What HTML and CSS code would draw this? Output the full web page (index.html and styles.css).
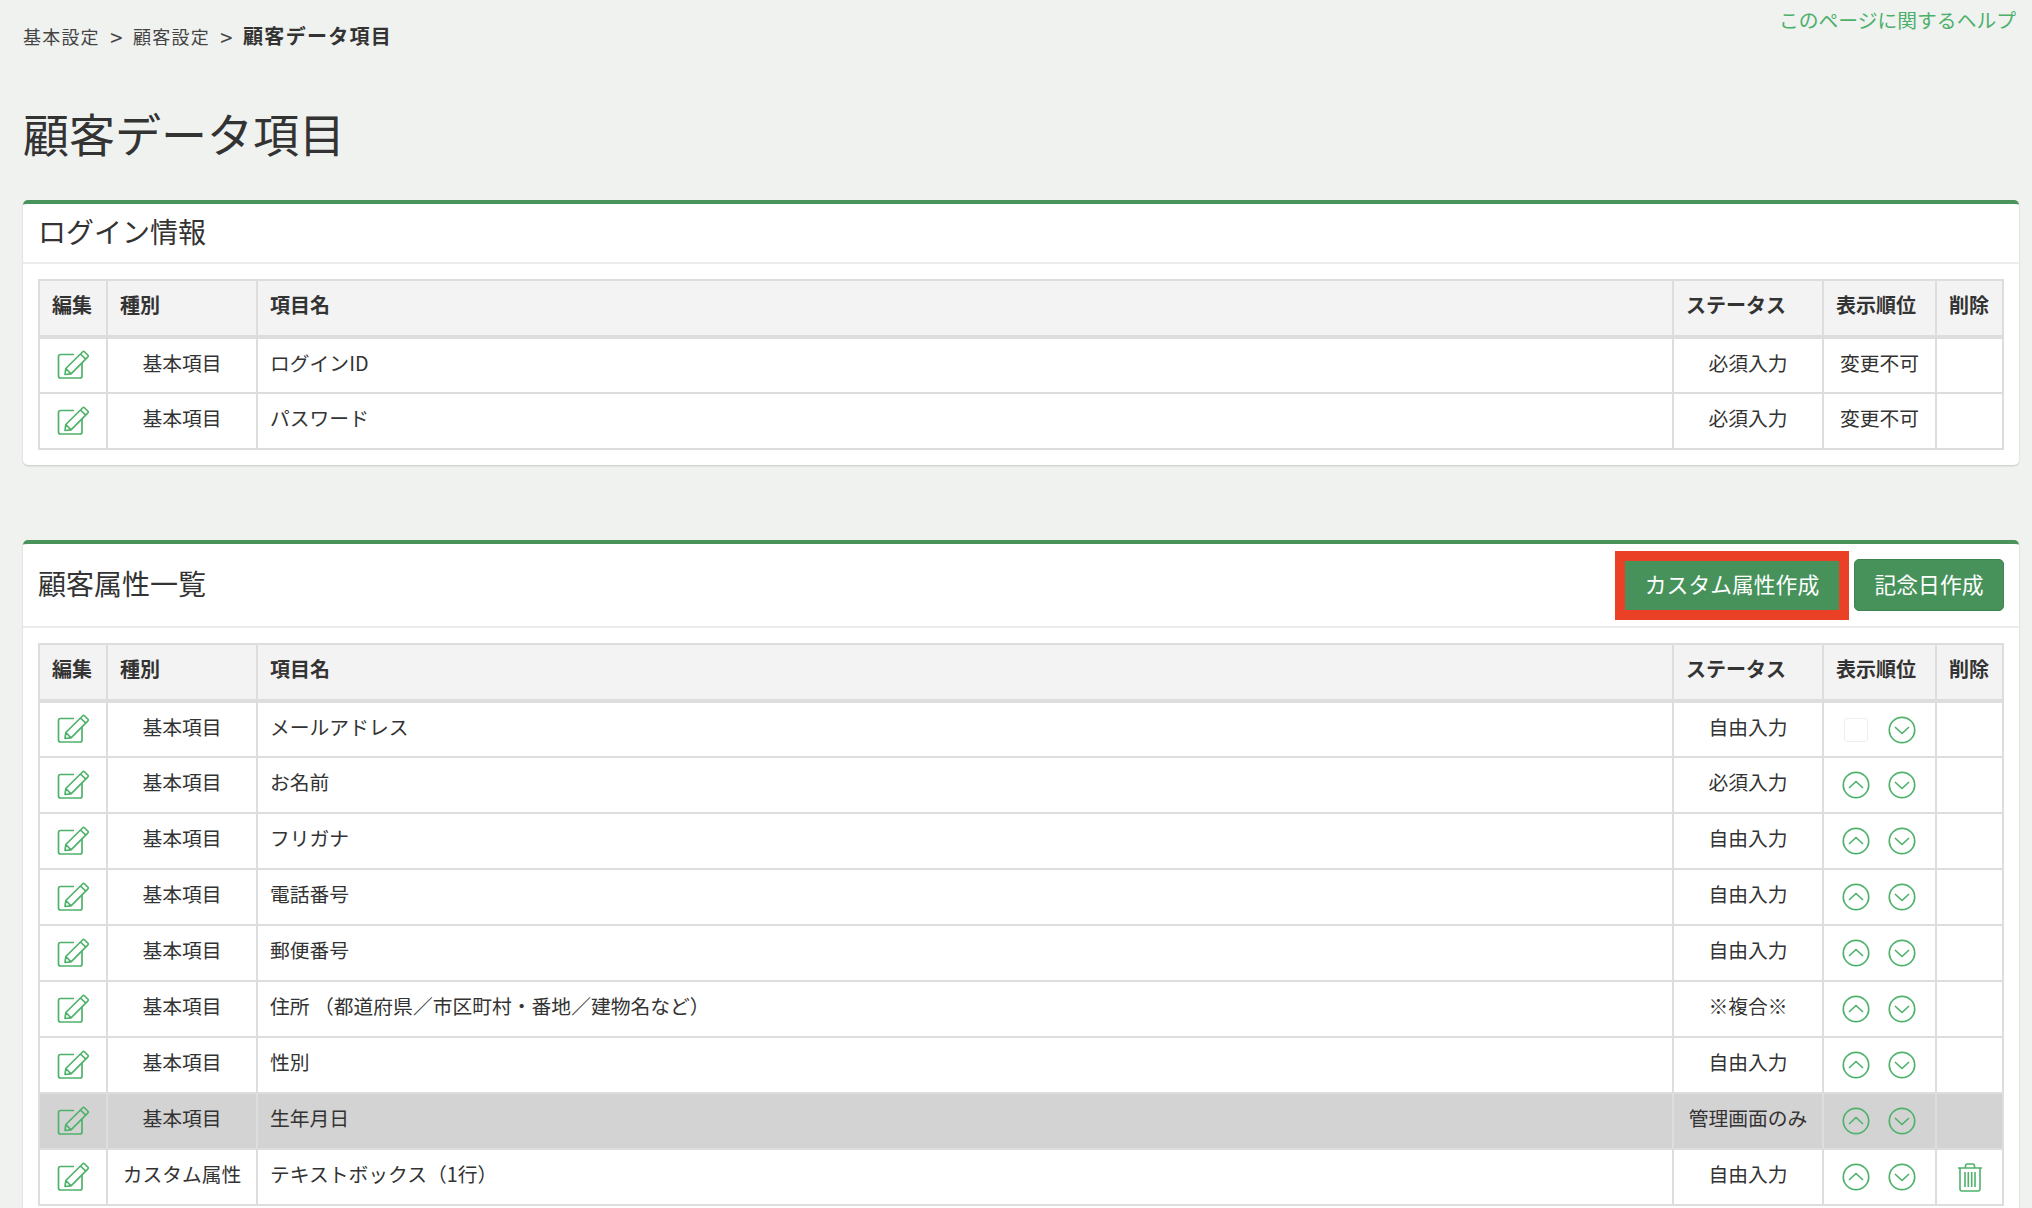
FILE: index.html
```html
<!DOCTYPE html>
<html lang="ja">
<head>
<meta charset="utf-8">
<title>顧客データ項目</title>
<link rel="stylesheet" href="styles.css">
</head>
<body>
<svg class="sprite" aria-hidden="true">
  <symbol id="i-edit" viewBox="0 0 33 29">
    <path d="M17 4.500H3.500a2 2 0 0 0-2 2V26a2 2 0 0 0 2 2H23a2 2 0 0 0 2-2V13" fill="none" stroke="currentColor" stroke-width="1.700"/>
    <path d="M8 24.500l.8-6L25.500 2a1.600 1.600 0 0 1 2.200 0l3 3a1.600 1.600 0 0 1 0 2.200L14 23.800zM8.800 18.500l5.200 5.300M23.500 4l5.200 5.200" fill="none" stroke="currentColor" stroke-width="1.700" stroke-linejoin="round"/>
  </symbol>
  <symbol id="i-up" viewBox="0 0 28 28">
    <circle cx="14" cy="14" r="12.700" fill="none" stroke="currentColor" stroke-width="1.700"/>
    <path d="M7.500 16.500L14 10.500l6.500 6" fill="none" stroke="currentColor" stroke-width="1.700" stroke-linecap="round" stroke-linejoin="round"/>
  </symbol>
  <symbol id="i-down" viewBox="0 0 28 28">
    <circle cx="14" cy="14" r="12.700" fill="none" stroke="currentColor" stroke-width="1.700"/>
    <path d="M7.500 11.500L14 17.500l6.500-6" fill="none" stroke="currentColor" stroke-width="1.700" stroke-linecap="round" stroke-linejoin="round"/>
  </symbol>
  <symbol id="i-trash" viewBox="0 0 26 29">
    <path d="M1 5h24M8.500 5V3a2 2 0 0 1 2-2h5a2 2 0 0 1 2 2v2M3 5v21a2 2 0 0 0 2 2h16a2 2 0 0 0 2-2V5M8 9v15M11.300 9v15M14.700 9v15M18 9v15" fill="none" stroke="currentColor" stroke-width="1.600"/>
  </symbol>
</svg>

<header class="topbar">
  <nav class="crumbs">
    <span>基本設定</span><span class="sep">&gt;</span><span>顧客設定</span><span class="sep">&gt;</span><strong>顧客データ項目</strong>
  </nav>
  <a class="help">このページに関するヘルプ</a>
</header>

<h1 class="title">顧客データ項目</h1>

<section class="panel panel-first">
  <div class="panel-head"><h2>ログイン情報</h2></div>
  <div class="panel-body">
    <table class="grid">
      <thead>
        <tr><th class="c-edit">編集</th><th class="c-kind">種別</th><th>項目名</th><th class="c-status">ステータス</th><th class="c-order">表示順位</th><th class="c-del">削除</th></tr>
      </thead>
      <tbody>
        <tr>
          <td class="icon"><svg class="ico-edit"><use href="#i-edit"/></svg></td><td class="mid"><span class="t">基本項目</span></td><td><span class="t">ログインID</span></td><td class="mid"><span class="t">必須入力</span></td><td class="mid"><span class="t">変更不可</span></td><td></td>
        </tr>
        <tr>
          <td class="icon"><svg class="ico-edit"><use href="#i-edit"/></svg></td><td class="mid"><span class="t">基本項目</span></td><td><span class="t">パスワード</span></td><td class="mid"><span class="t">必須入力</span></td><td class="mid"><span class="t">変更不可</span></td><td></td>
        </tr>
      </tbody>
    </table>
  </div>
</section>

<section class="panel">
  <div class="panel-head">
    <h2>顧客属性一覧</h2>
    <div class="actions">
      <a class="btn btn-marked">カスタム属性作成</a>
      <a class="btn">記念日作成</a>
    </div>
  </div>
  <div class="panel-body">
    <table class="grid">
      <thead>
        <tr><th class="c-edit">編集</th><th class="c-kind">種別</th><th>項目名</th><th class="c-status">ステータス</th><th class="c-order">表示順位</th><th class="c-del">削除</th></tr>
      </thead>
      <tbody>
        <tr>
          <td class="icon"><svg class="ico-edit"><use href="#i-edit"/></svg></td><td class="mid"><span class="t">基本項目</span></td><td><span class="t">メールアドレス</span></td><td class="mid"><span class="t">自由入力</span></td>
          <td><div class="order"><span class="blank"></span><svg class="ico-arrow"><use href="#i-down"/></svg></div></td><td></td>
        </tr>
        <tr>
          <td class="icon"><svg class="ico-edit"><use href="#i-edit"/></svg></td><td class="mid"><span class="t">基本項目</span></td><td><span class="t">お名前</span></td><td class="mid"><span class="t">必須入力</span></td>
          <td><div class="order"><svg class="ico-arrow"><use href="#i-up"/></svg><svg class="ico-arrow"><use href="#i-down"/></svg></div></td><td></td>
        </tr>
        <tr>
          <td class="icon"><svg class="ico-edit"><use href="#i-edit"/></svg></td><td class="mid"><span class="t">基本項目</span></td><td><span class="t">フリガナ</span></td><td class="mid"><span class="t">自由入力</span></td>
          <td><div class="order"><svg class="ico-arrow"><use href="#i-up"/></svg><svg class="ico-arrow"><use href="#i-down"/></svg></div></td><td></td>
        </tr>
        <tr>
          <td class="icon"><svg class="ico-edit"><use href="#i-edit"/></svg></td><td class="mid"><span class="t">基本項目</span></td><td><span class="t">電話番号</span></td><td class="mid"><span class="t">自由入力</span></td>
          <td><div class="order"><svg class="ico-arrow"><use href="#i-up"/></svg><svg class="ico-arrow"><use href="#i-down"/></svg></div></td><td></td>
        </tr>
        <tr>
          <td class="icon"><svg class="ico-edit"><use href="#i-edit"/></svg></td><td class="mid"><span class="t">基本項目</span></td><td><span class="t">郵便番号</span></td><td class="mid"><span class="t">自由入力</span></td>
          <td><div class="order"><svg class="ico-arrow"><use href="#i-up"/></svg><svg class="ico-arrow"><use href="#i-down"/></svg></div></td><td></td>
        </tr>
        <tr>
          <td class="icon"><svg class="ico-edit"><use href="#i-edit"/></svg></td><td class="mid"><span class="t">基本項目</span></td><td><span class="t">住所 （都道府県／市区町村・番地／建物名など）</span></td><td class="mid"><span class="t">※複合※</span></td>
          <td><div class="order"><svg class="ico-arrow"><use href="#i-up"/></svg><svg class="ico-arrow"><use href="#i-down"/></svg></div></td><td></td>
        </tr>
        <tr>
          <td class="icon"><svg class="ico-edit"><use href="#i-edit"/></svg></td><td class="mid"><span class="t">基本項目</span></td><td><span class="t">性別</span></td><td class="mid"><span class="t">自由入力</span></td>
          <td><div class="order"><svg class="ico-arrow"><use href="#i-up"/></svg><svg class="ico-arrow"><use href="#i-down"/></svg></div></td><td></td>
        </tr>
        <tr class="is-muted">
          <td class="icon"><svg class="ico-edit"><use href="#i-edit"/></svg></td><td class="mid"><span class="t">基本項目</span></td><td><span class="t">生年月日</span></td><td class="mid"><span class="t">管理画面のみ</span></td>
          <td><div class="order"><svg class="ico-arrow"><use href="#i-up"/></svg><svg class="ico-arrow"><use href="#i-down"/></svg></div></td><td></td>
        </tr>
        <tr>
          <td class="icon"><svg class="ico-edit"><use href="#i-edit"/></svg></td><td class="mid"><span class="t">カスタム属性</span></td><td><span class="t">テキストボックス（1行）</span></td><td class="mid"><span class="t">自由入力</span></td>
          <td><div class="order"><svg class="ico-arrow"><use href="#i-up"/></svg><svg class="ico-arrow"><use href="#i-down"/></svg></div></td><td class="icon"><svg class="ico-trash"><use href="#i-trash"/></svg></td>
        </tr>
      </tbody>
    </table>
  </div>
</section>
</body>
</html>
```

FILE: styles.css
```css
* { box-sizing: border-box; }
html, body { height: 1208px; overflow: hidden; }
body {
  margin: 0;
  padding: 0 13px 0 23px;
  background: #f0f2f0;
  color: #333;
  font-family: "Noto Sans CJK JP", "Noto Sans", sans-serif;
  font-size: 19.800px;
  line-height: 28px;
}
.sprite { display: none; }

.topbar { display: flex; justify-content: space-between; align-items: flex-start; height: 72px; }
.crumbs { display: flex; align-items: center; padding-top: 22px; font-size: 18px; letter-spacing: 1.200px; color: #444; }
.crumbs strong { font-size: 20px; font-weight: 700; color: #333; letter-spacing: 1.300px; }
.sep { margin: 0 10.500px; font-size: 22px; line-height: 28px; letter-spacing: 0; }
.help { padding: 6px 3px 0 0; color: #4cb06a; font-size: 19.800px; }

.title { height: 66px; margin: 27px 0 35px; font-size: 46px; line-height: 66px; font-weight: 400; color: #333; }

.panel {
  background: #fff;
  border-top: 4px solid #4a945c;
  border-radius: 5px;
  box-shadow: 0 1px 2px rgba(0,0,0,.18);
  width: 1996px;
}
.panel-first { margin-bottom: 75px; }
.panel-head {
  display: flex;
  justify-content: space-between;
  align-items: center;
  padding: 0 15px;
  min-height: 60px;
  border-bottom: 2px solid #ececec;
}
.panel + .panel .panel-head { min-height: 84px; }
.panel-head h2 { margin: 0 0 4px; font-size: 28px; font-weight: 400; line-height: 40px; color: #333; }
.actions { display: flex; align-items: center; gap: 5px; }
.btn {
  display: flex; align-items: center; justify-content: center;
  height: 52px; width: 150px;
  padding-bottom: 2px;
  background: #46925a;
  border: 1px solid #3f8350;
  border-radius: 5px;
  color: #fff;
  font-size: 21.800px;
}
.btn-marked { width: 234px; height: 69px; border: 10px solid #ea4025; border-radius: 0; }

.panel-body { padding: 15px; }
.grid { width: 1966px; border-collapse: collapse; table-layout: fixed; border: 2px solid #ddd; }
.grid th, .grid td { border: 2px solid #ddd; padding: 0 12px; vertical-align: middle; }
.grid th { height: 57px; background: #f3f3f3; font-weight: 700; font-size: 20px; text-align: left; border-bottom-width: 4px; padding-bottom: 6px; white-space: nowrap; }
.grid td { height: 56px; white-space: nowrap; }
.c-edit { width: 68px; }
.c-kind { width: 150px; }
.c-status { width: 150px; }
.c-order { width: 113px; }
.c-del { width: 67px; }
.grid td.mid, .grid td.icon { text-align: center; padding-left: 0; padding-right: 0; }
.t { display: block; position: relative; top: -3px; }
.is-muted td { background: #d3d3d3; }

.ico-edit { display: block; width: 33px; height: 29px; margin: -2px auto 0; color: #4fb26b; }
.ico-trash { display: block; width: 26px; height: 29px; margin: 0 auto; color: #4fb26b; }
.ico-arrow { display: block; width: 28px; height: 28px; color: #4fb26b; }
.order { display: flex; gap: 18px; margin-left: 6px; }
.blank { width: 24px; height: 24px; margin: 2px 2px 0; background: #fff; border: 1px solid #eee; border-radius: 3px; }
```
